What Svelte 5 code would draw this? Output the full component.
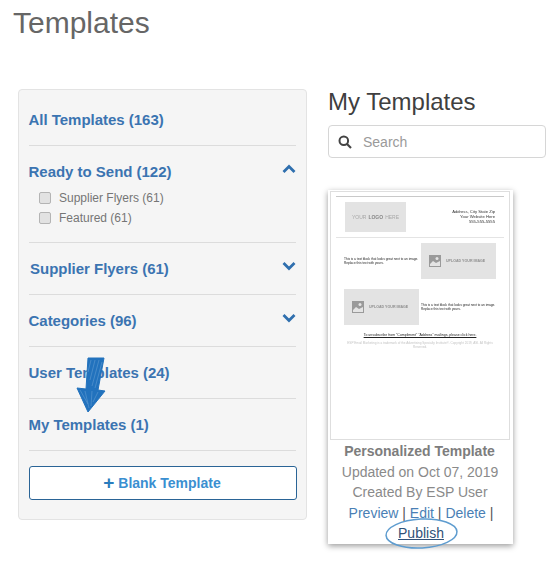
<script>
  const cats = [
    { label: 'All Templates (163)' },
    { label: 'Ready to Send (122)', open: true, up: true },
    { label: 'Supplier Flyers (61)', chev: true, nudge: true },
    { label: 'Categories (96)', chev: true },
    { label: 'User Templates (24)' },
    { label: 'My Templates (1)' }
  ];
  const subs = ['Supplier Flyers (61)', 'Featured (61)'];
  const hatch = [
    'M91 360L88 372', 'M95 360L90 380', 'M99 360L92 386', 'M102 362L95 388',
    'M80 390L88 404', 'M85 391L89 408', 'M92 391L91 406', 'M98 392L93 402'
  ];
</script>

<div class="page">
  <h1>Templates</h1>
  <div class="columns">
    <aside class="panel">
      {#each cats as c}
        <section class="cat" class:open={c.open}>
          <div class="head">
            <a href="#top" class="name" class:nudge={c.nudge}>{c.label}</a>
            {#if c.up || c.chev}
              <svg class="chev" class:flip={c.up} viewBox="0 0 14 10" width="14" height="10">
                <path d="M1.5 2 7 7.5 12.5 2" fill="none" stroke="#2f6fae" stroke-width="2.8" />
              </svg>
            {/if}
          </div>
          {#if c.open}
            <ul class="subs">
              {#each subs as s}
                <li><span class="box"></span>{s}</li>
              {/each}
            </ul>
          {/if}
        </section>
      {/each}
      <button class="blank"><span class="plus">+</span> Blank Template</button>
    </aside>

    <main class="right">
      <h2>My Templates</h2>
      <div class="search">
        <svg viewBox="0 0 14 14" width="14" height="14">
          <circle cx="5.8" cy="5.8" r="4.3" fill="none" stroke="#444" stroke-width="2" />
          <path d="M9 9l4 4" stroke="#444" stroke-width="2.2" />
        </svg>
        <span>Search</span>
      </div>

      <article class="card">
        <div class="frame">
          <div class="thumb">
            <div class="t-head">
              <div class="logo">YOUR <b>LOGO</b> HERE</div>
              <div class="addr">Address, City State Zip<br />Your Website Here<br />555-555-5555</div>
            </div>
            <div class="t-row one">
              <p>This is a text block that looks great next to an image. Replace this text with yours.</p>
              <div class="img">
                <svg viewBox="0 0 12 12" width="12" height="12"><rect width="12" height="12" fill="#9a9a9a" /><circle cx="8" cy="3.5" r="1.5" fill="#e4e4e4" /><path d="M1 9l3-3 3 2 4-2v5H1z" fill="#e4e4e4" /></svg>
                <span>UPLOAD YOUR IMAGE</span>
              </div>
            </div>
            <div class="t-row two">
              <div class="img">
                <svg viewBox="0 0 12 12" width="12" height="12"><rect width="12" height="12" fill="#9a9a9a" /><circle cx="8" cy="3.5" r="1.5" fill="#e4e4e4" /><path d="M1 9l3-3 3 2 4-2v5H1z" fill="#e4e4e4" /></svg>
                <span>UPLOAD YOUR IMAGE</span>
              </div>
              <p>This is a text block that looks great next to an image. Replace this text with yours.</p>
            </div>
            <div class="unsub">To unsubscribe from "Compliment" "Address" mailings, please click here.</div>
            <div class="legal">ESP Email Marketing is a trademark of the Advertising Specialty Institute®. Copyright 2019, ASI. All Rights<br />Reserved.</div>
          </div>
        </div>
        <div class="info">
          <div class="title">Personalized Template</div>
          <div>Updated on Oct 07, 2019</div>
          <div>Created By ESP User</div>
          <div class="links">
            <a href="#top">Preview</a> | <a href="#top">Edit</a> | <a href="#top">Delete</a> |
            <a href="#top" class="pub">Publish</a>
          </div>
        </div>
      </article>
    </main>
  </div>

  <svg class="overlay" viewBox="0 0 556 563" width="556" height="563">
    <path d="M88 358L104 358 98 390 105 391 88 412 77 388 86 389Z" fill="#2272bd" stroke="#2272bd" stroke-width="1" stroke-linejoin="round" />
    {#each hatch as h}
      <path d={h} stroke="#5f9ad2" stroke-width="0.6" fill="none" />
    {/each}
    <ellipse cx="421.500" cy="533.500" rx="35.500" ry="14.500" transform="rotate(-3 421.500 533.500)" fill="none" stroke="#5e9ccf" stroke-width="1.500" />
  </svg>
</div>

<style>
  :global(body) { margin: 0; background: #fff; }
  .page {
    position: relative;
    width: 556px;
    height: 563px;
    overflow: hidden;
    font-family: "Liberation Sans", Arial, sans-serif;
  }
  h1 {
    margin: 0;
    padding: 6px 0 0 13px;
    font-size: 30px;
    line-height: 34px;
    font-weight: 400;
    color: #666;
  }
  .columns {
    display: flex;
    align-items: flex-start;
    gap: 21px;
    margin: 49px 0 0 18px;
  }
  .panel {
    box-sizing: border-box;
    width: 289px;
    height: 431px;
    padding: 4px 10px 0;
    background: #f5f5f5;
    border: 1px solid #e3e3e3;
    border-radius: 4px;
  }
  .cat { border-bottom: 1px solid #dcdcdc; height: 52px; box-sizing: border-box; }
  .cat.open { height: 97px; }
  .head {
    display: flex;
    justify-content: space-between;
    align-items: center;
    height: 51px;
  }
  .name {
    margin-left: -0.500px;
    color: #3b74b1;
    font-size: 15px;
    font-weight: 700;
    text-decoration: none;
    letter-spacing: -0.02px;
  }
  .name.nudge { margin-left: 1px; }
  .chev { margin-top: -5px; }
  .chev.flip { transform: scaleY(-1); }
  .subs {
    list-style: none;
    margin: -9px 0 0;
    padding: 0 0 0 10px;
    font-size: 12px;
    color: #757575;
  }
  .subs li {
    display: flex;
    align-items: center;
    height: 20px;
  }
  .box {
    box-sizing: border-box;
    width: 12px;
    height: 12px;
    margin-right: 8px;
    background: #e2e2e2;
    border: 1px solid #b4b4b4;
    border-radius: 2px;
  }
  .blank {
    display: block;
    box-sizing: border-box;
    width: 268px;
    height: 34px;
    margin: 15px 0 0 0;
    padding-right: 8px;
    background: #fff;
    border: 1px solid #2a6496;
    border-radius: 3px;
    color: #3a8fd1;
    font: 700 14px "Liberation Sans", Arial, sans-serif;
  }
  .plus { color: #2a7cbd; font-size: 19px; line-height: 14px; vertical-align: -1px; }
  .right { width: 218px; }
  h2 {
    margin: -1px 0 0;
    font-size: 24px;
    line-height: 28px;
    font-weight: 400;
    color: #3f3f3f;
  }
  .search {
    box-sizing: border-box;
    height: 33px;
    margin-top: 9px;
    display: flex;
    align-items: center;
    gap: 11px;
    padding-left: 9px;
    border: 1px solid #d6d6d6;
    border-radius: 4px;
    color: #9a9a9a;
    font-size: 14px;
  }
  .card {
    box-sizing: border-box;
    width: 185px;
    height: 354px;
    margin-top: 32px;
    padding: 1px 3px 0 2px;
    background: #fff;
    box-shadow: 0 2px 6px rgba(0, 0, 0, 0.4);
  }
  .frame {
    box-sizing: border-box;
    height: 249px;
    border: 1px solid #dedede;
    padding: 4px 5px 0;
  }
  .thumb {
    border-top: 1px solid #c9c9c9;
    filter: blur(0.4px);
  }
  .t-head {
    display: flex;
    justify-content: space-between;
    height: 41px;
    padding: 5px 9px 0;
    box-sizing: border-box;
    border-bottom: 1px solid #e4e4e4;
  }
  .logo {
    display: flex;
    align-items: center;
    justify-content: center;
    gap: 1px;
    width: 61px;
    height: 30px;
    background: #e3e3e3;
    color: #a8a8a8;
    font-size: 5px;
  }
  .logo b { color: #888; padding: 0 1px; }
  .addr {
    text-align: right;
    font-size: 4.2px;
    line-height: 5px;
    color: #333;
    padding-top: 7px;
  }
  .t-row {
    display: flex;
    align-items: center;
    padding-left: 8px;
    gap: 2px;
  }
  .t-row p {
    width: 75px;
    margin: 0;
    font-size: 3.2px;
    line-height: 4.5px;
    color: #222;
  }
  .t-row.one { margin-top: 5px; }
  .t-row.two { margin-top: 10px; }
  .img {
    flex: none;
    display: flex;
    align-items: center;
    gap: 5px;
    box-sizing: border-box;
    width: 75px;
    height: 36px;
    padding-left: 8px;
    background: #e3e3e3;
    color: #8f8f8f;
    font-size: 3.6px;
    font-weight: 700;
  }
  .unsub {
    margin-top: 8px;
    text-align: center;
    font-size: 3.5px;
    line-height: 4px;
    color: #222;
    text-decoration: underline;
  }
  .legal {
    margin-top: 4px;
    text-align: center;
    font-size: 3.1px;
    line-height: 4px;
    color: #c4c4c4;
  }
  .info {
    text-align: center;
    font-size: 14px;
    line-height: 20.500px;
    color: #8a8a8a;
    padding-top: 1px;
  }
  .title { font-weight: 700; color: #7d7d7d; margin-left: -1px; }
  .links { color: #555; padding: 0 5px 0 7px; }
  .links a { color: #4a7fb5; text-decoration: none; }
  .links a.pub { color: #2f5178; text-decoration: underline; }
  .overlay { position: absolute; left: 0; top: 0; pointer-events: none; }
</style>
